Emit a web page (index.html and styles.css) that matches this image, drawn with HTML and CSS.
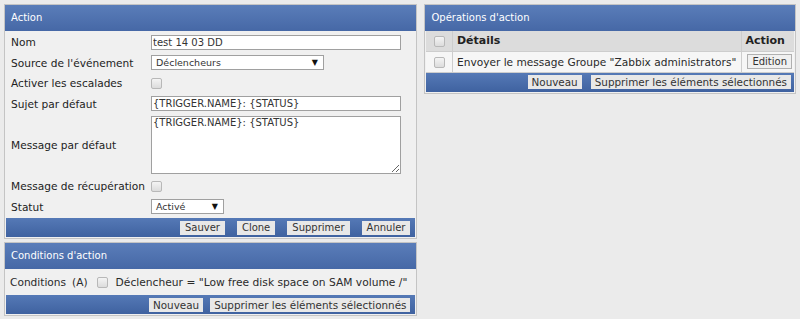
FILE: index.html
```html
<!DOCTYPE html>
<html lang="fr">
<head>
<meta charset="utf-8">
<title>Action</title>
<link rel="stylesheet" href="styles.css">
</head>
<body>
<div class="page">
  <div class="col-left">
    <section class="panel panel-action">
      <div class="phead">Action</div>
      <div class="form">
        <div class="row"><label class="lbl">Nom</label><input class="inp wide" type="text" value="test 14 03 DD"></div>
        <div class="row"><label class="lbl">Source de l'événement</label><div class="sel sel-src"><span>Déclencheurs</span><span class="arrow">▼</span></div></div>
        <div class="row"><label class="lbl">Activer les escalades</label><span class="cb"></span></div>
        <div class="row"><label class="lbl">Sujet par défaut</label><input class="inp wide" type="text" value="{TRIGGER.NAME}: {STATUS}"></div>
        <div class="row row-ta"><label class="lbl">Message par défaut</label><textarea class="ta">{TRIGGER.NAME}: {STATUS}</textarea></div>
        <div class="row"><label class="lbl">Message de récupération</label><span class="cb"></span></div>
        <div class="row"><label class="lbl">Statut</label><div class="sel sel-stat"><span>Activé</span><span class="arrow">▼</span></div></div>
      </div>
      <div class="bar">
        <button class="btn">Sauver</button>
        <button class="btn">Clone</button>
        <button class="btn">Supprimer</button>
        <button class="btn">Annuler</button>
      </div>
    </section>
    <section class="panel panel-cond">
      <div class="phead">Conditions d'action</div>
      <div class="cond-row">
        <span class="cond-lbl">Conditions</span>
        <span class="cond-a">(A)</span>
        <span class="cb cond-cb"></span>
        <span class="cond-txt">Déclencheur = "Low free disk space on SAM volume /"</span>
      </div>
      <div class="bar bar-sm bar-cond">
        <button class="btn">Nouveau</button>
        <button class="btn">Supprimer les éléments sélectionnés</button>
      </div>
    </section>
  </div>
  <div class="col-right">
    <section class="panel panel-ops">
      <div class="phead">Opérations d'action</div>
      <table class="ops">
        <thead>
          <tr><th class="c-cb"><span class="cb"></span></th><th class="c-det">Détails</th><th class="c-act">Action</th></tr>
        </thead>
        <tbody>
          <tr><td class="c-cb"><span class="cb"></span></td><td class="c-det">Envoyer le message Groupe "Zabbix administrators"</td><td class="c-act c-act-btn"><button class="btn btn-ed">Edition</button></td></tr>
        </tbody>
      </table>
      <div class="bar bar-sm">
        <button class="btn">Nouveau</button>
        <button class="btn">Supprimer les éléments sélectionnés</button>
      </div>
    </section>
  </div>
</div>
</body>
</html>
```
FILE: styles.css
```css
* { box-sizing: border-box; }
html, body { margin: 0; padding: 0; }
body {
  background: #ebebeb;
  font-family: "DejaVu Sans", Verdana, sans-serif;
  font-size: 10.5px;
  color: #2a2a2a;
  width: 800px;
  height: 319px;
  overflow: hidden;
}
.page {
  display: flex;
  gap: 7px;
  padding: 4px;
  align-items: flex-start;
}
.col-left { width: 414px; display: flex; flex-direction: column; gap: 3px; }
.col-right { width: 372px; }
.panel {
  border: 1px solid #c4c4c4;
  background: #f0f0f0;
  padding: 0 1px 1px 1px;
}
.phead {
  height: 26px;
  line-height: 26px;
  padding-left: 6px;
  color: #fff;
  font-size: 10px;
  background: linear-gradient(#5a7db9, #4668a6);
  margin: 0 -1px;
}
.form { padding: 1px 0 1px 5px; }
.row {
  display: flex;
  align-items: center;
  min-height: 20.5px;
}
.lbl { width: 140px; flex: none; font-size: 10.6px; color: #222; }
.inp {
  height: 15px;
  border: 1px solid #a0a0a0;
  background: #fff;
  font-family: inherit;
  font-size: 10px;
  color: #333;
  padding: 0 1px;
  margin: 0;
  outline: none;
}
.wide { width: 250px; }
.sel {
  height: 15px;
  border: 1px solid #a0a0a0;
  background: #fff;
  font-size: 9.5px;
  color: #333;
  display: flex;
  align-items: center;
  justify-content: space-between;
  padding: 0 5px 0 4px;
}
.sel-src { width: 173px; }
.sel-stat { width: 73px; }
.arrow { font-size: 8px; color: #111; }
.cb {
  display: inline-block;
  width: 11px;
  height: 11px;
  border: 1px solid #b8b8b8;
  border-radius: 2px;
  background: linear-gradient(#f4f4f4, #dcdcdc);
  flex: none;
}
.row-ta { min-height: 62px; }
.ta {
  width: 250px;
  height: 58px;
  margin: 0;
  border: 1px solid #a0a0a0;
  background: #fff;
  font-family: inherit;
  font-size: 10px;
  color: #333;
  padding: 0 1px;
  resize: both;
  outline: none;
}
.bar {
  height: 19px;
  background: linear-gradient(#5579b6, #3f62a0);
  display: flex;
  justify-content: flex-end;
  align-items: center;
  gap: 12px;
  padding-right: 5px;
}
.bar-sm { gap: 9px; padding-right: 3px; }
.bar-cond { gap: 7px; padding-right: 5px; }
.btn {
  height: 14px;
  border: none;
  background: #e8e8e8;
  font-family: inherit;
  font-size: 10px;
  color: #333;
  padding: 0 5px;
  line-height: 14px;
  border-radius: 0;
}
.bar-sm .btn { font-size: 10.4px; padding: 0 4px; }
.cond-row {
  height: 26px;
  display: flex;
  align-items: center;
  padding-left: 4px;
  gap: 6px;
  font-size: 10.6px;
  white-space: nowrap;
}
.cond-cb { margin-left: 3px; }
.cond-txt { font-size: 10.7px; margin-left: 2px; }
.ops {
  width: 100%;
  border-collapse: collapse;
  font-size: 10.6px;
}
.ops th, .ops td {
  border: 1px solid #cdcdcd;
  padding: 0 4px;
  text-align: left;
  white-space: nowrap;
}
.ops thead tr { background: #dcdcdc; height: 20px; }
.ops tbody tr { background: #f6f6f6; height: 21px; }
.ops th { font-weight: bold; color: #222; font-size: 11px; }
.c-cb { width: 26px; text-align: center !important; }
.c-cb .cb { vertical-align: middle; }
.c-act { width: 53px; }
.ops td.c-act-btn { text-align: right; padding-right: 2px; }
.btn-ed {
  background: #f0f0f0;
  border: 1px solid #b0b0b0;
  height: 15px;
  line-height: 13px;
  padding: 0 4px;
}
.ops tr > :first-child { border-left: none; }
.ops tr > :last-child { border-right: none; }
.ops thead th { border-top: none; }
```
